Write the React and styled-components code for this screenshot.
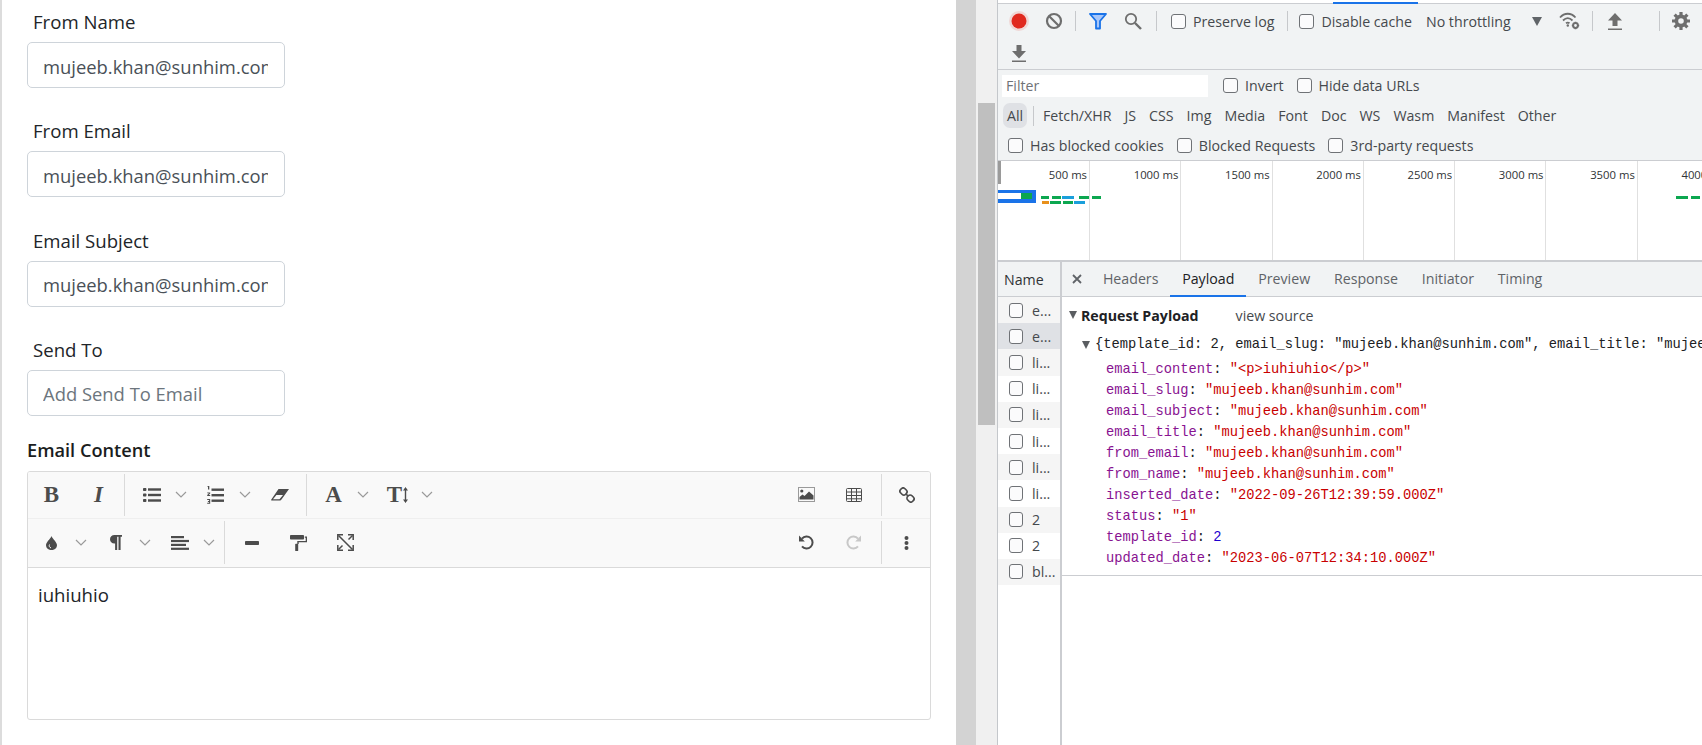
import React from 'react';
import styled, { createGlobalStyle } from 'styled-components';

const GlobalStyle = createGlobalStyle`
  * { box-sizing: border-box; }
  html, body { margin: 0; padding: 0; background: #fff; }
  body { font-family: "Open Sans", "Liberation Sans", sans-serif; overflow: hidden; }
`;

const Page = styled.div`
  display: flex;
  width: 1702px;
  height: 745px;
  overflow: hidden;
`;

/* ---------- form side ---------- */

const FormPane = styled.div`
  width: 956px;
  flex: none;
  border-left: 2px solid #dcdcdc;
  padding: 10px 25px 0;
  background: #fff;
`;

const FieldLabel = styled.label`
  display: block;
  height: 24px;
  line-height: 24px;
  padding-left: 6px;
  margin-bottom: 8px;
  font-size: 18.6px;
  color: #212529;
`;

const Field = styled.div`
  margin-bottom: 31.3px;
  &:nth-of-type(4) { margin-bottom: 22px; }
`;

const TextInput = styled.input`
  display: block;
  width: 258px;
  height: 46px;
  padding: 2px 16px 0 15px;
  border: 1px solid #ced4da;
  border-radius: 5px;
  background: #fff;
  font-family: inherit;
  font-size: 18.4px;
  color: #495057;
  outline: none;
  &::placeholder { color: #6c757d; opacity: 1; }
`;

const SectionLabel = styled.div`
  height: 24px;
  line-height: 24px;
  margin-bottom: 9px;
  font-size: 18.2px;
  font-weight: 600;
  color: #1a1d20;
`;

const Editor = styled.div`
  width: 904px;
  height: 249.6px;
  border: 1px solid #dadada;
  border-radius: 3px;
  overflow: hidden;
`;

const EditorRow = styled.div`
  display: flex;
  align-items: center;
  height: ${p => p.$h}px;
  background: #f9f9f9;
  border-bottom: 1px solid ${p => p.$line};
`;

const BtnGroup = styled.div`
  display: flex;
  align-items: center;
  height: ${p => p.$h}px;
  padding: 0 ${p => p.$pr ?? 2}px 0 ${p => p.$pl ?? 3}px;
  border-right: ${p => (p.$last ? 'none' : '1px solid #dadada')};
`;

const RightTools = styled.div`
  display: flex;
  align-items: center;
  margin-left: auto;
`;

const EditorBtn = styled.span`
  display: flex;
  align-items: center;
  justify-content: center;
  gap: 1px;
  width: 47px;
  height: 40px;
  color: ${p => (p.$off ? '#c8c8c8' : '#4c4c4c')};
`;

const Glyph = styled.span`
  font-family: "Liberation Serif", serif;
  font-weight: 700;
  font-style: ${p => (p.$italic ? 'italic' : 'normal')};
  font-size: 23px;
  line-height: 1;
`;

const ChevronSlot = styled.span`
  display: flex;
  align-items: center;
  width: 17px;
  height: 40px;
  color: #9a9a9a;
`;

const EditorBody = styled.div`
  padding: 15px 10px;
  font-size: 18.6px;
  line-height: 24px;
  color: #212529;
`;

/* ---------- middle scrollbar ---------- */

const Track = styled.div`
  width: 20px;
  flex: none;
  background: #d3d3d3;
`;

const Gutter = styled.div`
  width: 21px;
  flex: none;
  background: #f0f0f0;
  padding: 103px 2px 0 2px;
`;

const Thumb = styled.div`
  height: 322px;
  background: #bfbfbf;
`;

/* ---------- devtools ---------- */

const DevTools = styled.div`
  flex: 1;
  min-width: 0;
  display: flex;
  flex-direction: column;
  border-left: 1px solid #c4c7cb;
  font-size: 14.2px;
  color: #45494d;
  background: #fff;
`;

const TopEdge = styled.div`
  height: 4px;
  flex: none;
  background: #fff;
  border-bottom: 1px solid #cbcdd1;
  padding-left: 335px;
`;

const TopTab = styled.div`
  width: 85px;
  height: 2px;
  margin-top: 2px;
  background: #1a73e8;
`;

const Controls = styled.div`
  flex: none;
  background: #f1f3f4;
  border-bottom: 1px solid #cbcdd1;
`;

const Bar = styled.div`
  display: flex;
  align-items: center;
  height: ${p => p.$h}px;
  padding-left: ${p => p.$pl || 0}px;
`;

const ToolIcon = styled.span`
  display: flex;
  align-items: center;
  justify-content: center;
  width: 35px;
  height: 28px;
  flex: none;
  color: #6e6e6e;
`;

const ToolSep = styled.span`
  width: 1px;
  height: 20px;
  flex: none;
  margin-left: ${p => p.$ml ?? 4}px;
  margin-right: ${p => p.$mr ?? 4}px;
  background: #c6c8cb;
`;

const Check = styled.span`
  display: inline-block;
  width: ${p => p.$w || 15}px;
  height: 15px;
  flex: none;
  border: 1px solid #6f7276;
  border-radius: 3px;
  background: #fbfbfc;
`;

const CheckLabel = styled.span`
  display: flex;
  align-items: center;
  gap: 7px;
  flex: none;
  margin-left: ${p => p.$ml || 0}px;
  white-space: nowrap;
`;

const Throttle = styled.span`
  display: flex;
  align-items: center;
  justify-content: space-between;
  width: 116px;
  flex: none;
  margin-left: 14px;
  margin-right: 10px;
  white-space: nowrap;
`;

const Caret = styled.span`
  width: 0;
  height: 0;
  border-left: 5px solid transparent;
  border-right: 5px solid transparent;
  border-top: 9px solid #606468;
`;

const FilterBox = styled.div`
  width: 206px;
  height: 22px;
  flex: none;
  margin-right: 15px;
  padding-left: 4px;
  line-height: 22px;
  background: #fff;
  color: #6f7276;
`;

const TypeAll = styled.span`
  width: 24px;
  height: 25px;
  flex: none;
  line-height: 25px;
  text-align: center;
  border-radius: 7px;
  background: #dfe1e5;
`;

const TypeSep = styled.span`
  width: 1px;
  height: 20px;
  flex: none;
  margin: 0 9px 0 6px;
  background: #c6c8cb;
`;

const TypeItem = styled.span`
  flex: none;
  margin-right: 13px;
`;

const Overview = styled.div`
  height: 101px;
  flex: none;
  display: flex;
  flex-direction: column;
  overflow: hidden;
  background: #fff;
  border-bottom: 2px solid #cbcdd1;
`;

const TimeRuler = styled.div`
  display: flex;
  height: 99px;
  flex: none;
  margin-bottom: -99px;
`;

const TimeCell = styled.div`
  width: ${p => p.$w}px;
  flex: none;
  padding: 6px 2px 0 0;
  text-align: right;
  font-size: 11.3px;
  line-height: 16px;
  white-space: nowrap;
  color: #303336;
  border-right: 1px solid #e0e0e0;
`;

const Lanes = styled.svg`
  display: block;
  flex: none;
`;

const Lower = styled.div`
  flex: 1;
  min-height: 0;
  display: flex;
`;

const NameCol = styled.div`
  width: 64px;
  flex: none;
  border-right: 2px solid #cbcdd1;
`;

const NameHead = styled.div`
  height: 35px;
  padding-left: 6px;
  line-height: 35px;
  background: #f1f3f4;
  border-bottom: 1px solid #cbcdd1;
  color: #303336;
`;

const NameRow = styled.div`
  display: flex;
  align-items: center;
  gap: 9px;
  height: 26.2px;
  padding-left: 11px;
  background: ${p => (p.$selected ? '#dfe1e5' : p.$odd ? '#f5f5f5' : '#fff')};
  overflow: hidden;
  white-space: nowrap;
`;

const Details = styled.div`
  flex: 1;
  min-width: 0;
  display: flex;
  flex-direction: column;
`;

const Tabs = styled.div`
  display: flex;
  align-items: stretch;
  height: 35px;
  flex: none;
  background: #f1f3f4;
  border-bottom: 1px solid #cbcdd1;
`;

const CloseX = styled.span`
  display: flex;
  align-items: center;
  justify-content: center;
  width: 29px;
  color: #5f6368;
`;

const Tab = styled.span`
  display: flex;
  align-items: center;
  padding: 0 11.9px;
  margin-bottom: -1px;
  color: ${p => (p.$active ? '#202124' : '#5f6368')};
  border-bottom: 2px solid ${p => (p.$active ? '#1a73e8' : 'transparent')};
`;

const Payload = styled.div`
  height: 279px;
  flex: none;
  overflow: hidden;
  border-bottom: 1px solid #cbcdd1;
  padding-top: 7px;
`;

const PayloadHead = styled.div`
  display: flex;
  align-items: center;
  height: 22px;
  padding-left: 7px;
  margin-bottom: 8px;
`;

const Tri = styled.span`
  width: 0;
  height: 0;
  flex: none;
  margin-right: ${p => p.$mr}px;
  border-left: 4.5px solid transparent;
  border-right: 4.5px solid transparent;
  border-top: 8px solid #5a5d61;
`;

const HeadTitle = styled.b`
  font-weight: 700;
  color: #202124;
  margin-right: 37px;
`;

const SummaryLine = styled.div`
  display: flex;
  align-items: center;
  height: 21px;
  padding-left: 20px;
  margin-bottom: 4px;
  font-family: "Liberation Mono", monospace;
  font-size: 13.75px;
  white-space: nowrap;
  color: #202124;
`;

const PropLine = styled.div`
  height: 21.05px;
  line-height: 21px;
  padding-left: 44px;
  font-family: "Liberation Mono", monospace;
  font-size: 13.75px;
  white-space: nowrap;
  color: #202124;
`;

const PropKey = styled.span`
  color: #881391;
`;

const PropValue = styled.span`
  color: ${p => (p.$num ? '#1c00cf' : '#c80000')};
`;

/* ---------- editor icons ---------- */

const Chevron = () => (
  <svg width="12" height="7" viewBox="0 0 12 7"><path d="M1 1l5 5 5-5" fill="none" stroke="currentColor" strokeWidth="1.2" /></svg>
);

const UlIcon = () => (
  <svg width="18" height="14" viewBox="0 0 18 14" fill="currentColor">
    <rect x="0" y="0" width="3.4" height="3" rx=".8" /><rect x="0" y="5.5" width="3.4" height="3" rx=".8" /><rect x="0" y="11" width="3.4" height="3" rx=".8" />
    <rect x="5" y=".3" width="13" height="2.4" /><rect x="5" y="5.8" width="13" height="2.4" /><rect x="5" y="11.3" width="13" height="2.4" />
  </svg>
);

const OlIcon = () => (
  <svg width="17" height="18" viewBox="0 0 17 18" fill="currentColor">
    <rect x="4.5" y="2.5" width="12.5" height="2.4" /><rect x="4.5" y="8" width="12.5" height="2.4" /><rect x="4.5" y="13.5" width="12.5" height="2.4" />
    <path d="M1 0h1.3v3.6H1V1H.2zM.2 6.4h3v1L1.700 9h1.500v1H.2V9l1.700-1.700H.2zM.2 13h3v4.800h-3v-1h1.900v-.9H.900v-.9h1.200v-1H.2z" />
  </svg>
);

const EraserIcon = () => (
  <svg width="18" height="12" viewBox="0 0 18 12" fill="currentColor">
    <path d="M7.500 0H18l-7.300 10.200c-.6.900-1.200 1.300-2 1.300H.8C.2 11.500 0 11 .3 10.500zM2 10.300h6.500L12 6H5.400z" fillRule="evenodd" />
  </svg>
);

const SizeArrow = () => (
  <svg width="5" height="16" viewBox="0 0 5 16" fill="currentColor">
    <path d="M2.500 0L5 3.500H3.200v9H5L2.500 16 0 12.500h1.800v-9H0z" />
  </svg>
);

const DropIcon = () => (
  <svg width="11" height="14" viewBox="0 0 11 14" fill="currentColor">
    <path d="M5.500 0C6.600 3 11 6.200 11 9.200A5.400 4.800 0 0 1 0 9.200C0 6.200 4.400 3 5.500 0z" />
    <path d="M3.500 8.500c-.7 1.600 0 3 1.500 3.400" fill="none" stroke="#f9f9f9" strokeWidth="1" />
  </svg>
);

const ParaIcon = () => (
  <svg width="12" height="15" viewBox="0 0 12 15" fill="currentColor">
    <path d="M4.500 0H12v1.800h-1.400V15H8.500V1.800H7.200V15H5.100V8.600H4.500C1.800 8.600 0 6.800 0 4.300S1.800 0 4.500 0z" />
  </svg>
);

const AlignIcon = () => (
  <svg width="18" height="14" viewBox="0 0 18 14" fill="currentColor">
    <rect x="0" y="0" width="13" height="2.200" /><rect x="0" y="3.900" width="18" height="2.200" />
    <rect x="0" y="7.800" width="15" height="2.200" /><rect x="0" y="11.700" width="18" height="2.200" />
  </svg>
);

const HrIcon = () => (
  <svg width="14" height="4" viewBox="0 0 14 4" fill="currentColor"><rect width="14" height="4" rx=".8" /></svg>
);

const PaintIcon = () => (
  <svg width="17" height="16" viewBox="0 0 17 16" fill="currentColor">
    <rect x="0" y="0" width="14" height="4.500" rx=".8" />
    <path d="M14.800 1.500H17v5.800H8.700v1.700H7.300V6h8.400V2.700h-.9z" />
    <rect x="5.200" y="8.800" width="3" height="7.200" rx=".6" />
  </svg>
);

const FullIcon = () => (
  <svg width="17" height="17" viewBox="0 0 17 17" fill="none" stroke="currentColor" strokeWidth="1.500">
    <path d="M.8 6V.8H6M11 .8h5.200V6M16.200 11v5.200H11M6 16.200H.8V11" />
    <path d="M1.500 1.500l14 14M15.500 1.500l-4 4M5.500 11.500l-4 4" />
  </svg>
);

const ImageIcon = () => (
  <svg width="17" height="15" viewBox="0 0 17 15">
    <rect x=".5" y=".5" width="16" height="14" fill="none" stroke="#9a9a9a" />
    <circle cx="3.800" cy="4" r="1.600" fill="#4c4c4c" />
    <path d="M1.500 12.500V10l3-2.500L6.500 9l4.500-4.500 4.500 4v4z" fill="#4c4c4c" />
  </svg>
);

const TableIcon = () => (
  <svg width="16" height="14" viewBox="0 0 16 14" fill="none" stroke="currentColor" strokeWidth="1">
    <rect x=".5" y=".5" width="15" height="13" rx="1" />
    <path d="M.5 4h15M.5 7.500h15M.5 10.800h15M5.500.5v13M10.500.5v13" />
  </svg>
);

const LinkIcon = () => (
  <svg width="16" height="16" viewBox="0 0 16 16" fill="none" stroke="currentColor" strokeWidth="1.700">
    <rect x="1" y="1.500" width="7" height="6" rx="2.600" transform="rotate(45 4.500 4.500)" />
    <rect x="8" y="8.500" width="7" height="6" rx="2.600" transform="rotate(45 11.500 11.500)" />
    <path d="M7 7l2 2" />
  </svg>
);

const UndoIcon = ({ flip }) => (
  <svg width="15" height="15" viewBox="0 0 15 15" style={flip ? { transform: 'scaleX(-1)' } : undefined}>
    <path d="M3 3.600A6 6 0 1 1 3 11.400" fill="none" stroke="currentColor" strokeWidth="2" />
    <path d="M0 .6l5.800 5.800H0z" fill="currentColor" />
  </svg>
);

const DotsIcon = () => (
  <svg width="5" height="14" viewBox="0 0 5 14" fill="currentColor">
    <circle cx="2.500" cy="2" r="2" /><circle cx="2.500" cy="7" r="2" /><circle cx="2.500" cy="12" r="2" />
  </svg>
);

/* ---------- devtools icons ---------- */

const RecordIcon = () => (
  <svg width="22" height="22" viewBox="0 0 22 22">
    <circle cx="11" cy="11" r="10" fill="#e9302624" />
    <circle cx="11" cy="11" r="7.500" fill="#e0291f" />
  </svg>
);

const BlockIcon = () => (
  <svg width="18" height="18" viewBox="0 0 18 18" fill="none" stroke="#6e6e6e" strokeWidth="2.200">
    <circle cx="9" cy="9" r="7" /><path d="M4 4l10 10" />
  </svg>
);

const FunnelIcon = () => (
  <svg width="18" height="17" viewBox="0 0 18 17">
    <path d="M1 1h16l-6 7v7.500H7V8z" fill="#a8c7fa" stroke="#1a73e8" strokeWidth="1.800" strokeLinejoin="round" />
  </svg>
);

const SearchIcon = () => (
  <svg width="18" height="18" viewBox="0 0 18 18" fill="none" stroke="#6e6e6e">
    <circle cx="7" cy="7" r="5.200" strokeWidth="1.800" /><path d="M11 11l6 6" strokeWidth="2.400" />
  </svg>
);

const WifiIcon = () => (
  <svg width="21" height="18" viewBox="0 0 21 18" fill="none" stroke="#6e6e6e" strokeWidth="1.800">
    <path d="M1 5.500c4.500-5 11-5 15.500 0M4 8.500c3-3 6.500-3 9.500 0M7 11.300c1.300-1 2.200-1 3.500 0" />
    <circle cx="8.800" cy="13.500" r="1.200" fill="#6e6e6e" stroke="none" />
    <circle cx="16.500" cy="13.500" r="2.400" strokeWidth="2" />
    <path d="M16.500 9.800v1.300M16.500 15.900v1.300M12.800 13.500h1.300M18.900 13.500h1.300" strokeWidth="1.600" />
  </svg>
);

const ArrowBar = ({ down }) => (
  <svg width="14" height="17" viewBox="0 0 14 17" fill="#6e6e6e">
    <path d={down ? 'M4.500 0h5v6H14l-7 7.500L0 6h4.500z' : 'M7 0l7 7.500H9.500V13h-5V7.500H0z'} />
    <rect x="0" y="15.500" width="14" height="1.500" />
  </svg>
);

const GearIcon = () => (
  <svg width="18" height="18" viewBox="0 0 18 18" fill="none" stroke="#6e6e6e">
    <circle cx="9" cy="9" r="4.600" strokeWidth="3.600" />
    <path d="M9 0v4M9 14v4M0 9h4M14 9h4M2.600 2.600l2.800 2.800M12.600 12.600l2.800 2.800M15.400 2.600l-2.800 2.800M5.400 12.600l-2.800 2.800" strokeWidth="3.200" />
  </svg>
);

/* ---------- data ---------- */

const fields = [
  { label: 'From Name', value: 'mujeeb.khan@sunhim.com' },
  { label: 'From Email', value: 'mujeeb.khan@sunhim.com' },
  { label: 'Email Subject', value: 'mujeeb.khan@sunhim.com' },
  { label: 'Send To', value: '', placeholder: 'Add Send To Email' },
];

const types = ['Fetch/XHR', 'JS', 'CSS', 'Img', 'Media', 'Font', 'Doc', 'WS', 'Wasm', 'Manifest', 'Other'];
const times = ['500 ms', '1000 ms', '1500 ms', '2000 ms', '2500 ms', '3000 ms', '3500 ms', '4000 ms'];
const names = ['e...', 'e...', 'li...', 'li...', 'li...', 'li...', 'li...', 'li...', '2', '2', 'bl...'];
const tabs = ['Headers', 'Payload', 'Preview', 'Response', 'Initiator', 'Timing'];

const payload = [
  ['email_content', '"<p>iuhiuhio</p>"'],
  ['email_slug', '"mujeeb.khan@sunhim.com"'],
  ['email_subject', '"mujeeb.khan@sunhim.com"'],
  ['email_title', '"mujeeb.khan@sunhim.com"'],
  ['from_email', '"mujeeb.khan@sunhim.com"'],
  ['from_name', '"mujeeb.khan@sunhim.com"'],
  ['inserted_date', '"2022-09-26T12:39:59.000Z"'],
  ['status', '"1"'],
  ['template_id', '2', true],
  ['updated_date', '"2023-06-07T12:34:10.000Z"'],
];

const laneBars = [
  [43, 29, 8, '#0ca750'], [54, 29, 9, '#0ca750'], [64, 29, 12, '#1a9fdb'], [81, 29, 10, '#0ca750'], [94, 29, 9, '#0ca750'],
  [44, 34, 7, '#e8901b'], [52, 34, 11, '#0ca750'], [65, 34, 10, '#0ca750'], [76, 34, 11, '#1a9fdb'],
  [678, 29, 12, '#0ca750'], [693, 29, 9, '#0ca750'],
];

const Drop = ({ children }) => (
  <>
    <EditorBtn>{children}</EditorBtn>
    <ChevronSlot><Chevron /></ChevronSlot>
  </>
);

export default function App() {
  return (
    <Page>
      <GlobalStyle />
      <FormPane>
        {fields.map(f => (
          <Field key={f.label}>
            <FieldLabel>{f.label}</FieldLabel>
            <TextInput readOnly value={f.value} placeholder={f.placeholder} />
          </Field>
        ))}
        <SectionLabel>Email Content</SectionLabel>
        <Editor>
          <EditorRow $h={47} $line="#efefef">
            <BtnGroup $h={42} $pl={0}>
              <EditorBtn><Glyph>B</Glyph></EditorBtn>
              <EditorBtn><Glyph $italic>I</Glyph></EditorBtn>
            </BtnGroup>
            <BtnGroup $h={42} $pr={3}>
              <Drop><UlIcon /></Drop>
              <Drop><OlIcon /></Drop>
              <EditorBtn><EraserIcon /></EditorBtn>
            </BtnGroup>
            <BtnGroup $h={42} $last>
              <Drop><Glyph>A</Glyph></Drop>
              <Drop><Glyph>T</Glyph><SizeArrow /></Drop>
            </BtnGroup>
            <RightTools>
              <BtnGroup $h={42} $pr={4}>
                <EditorBtn><ImageIcon /></EditorBtn>
                <EditorBtn><TableIcon /></EditorBtn>
              </BtnGroup>
              <BtnGroup $h={42} $last $pr={0} $pl={1}>
                <EditorBtn><LinkIcon /></EditorBtn>
              </BtnGroup>
            </RightTools>
          </EditorRow>
          <EditorRow $h={49} $line="#dadada">
            <BtnGroup $h={43} $pr={4} $pl={0}>
              <Drop><DropIcon /></Drop>
              <Drop><ParaIcon /></Drop>
              <Drop><AlignIcon /></Drop>
            </BtnGroup>
            <BtnGroup $h={43} $last>
              <EditorBtn><HrIcon /></EditorBtn>
              <EditorBtn><PaintIcon /></EditorBtn>
              <EditorBtn><FullIcon /></EditorBtn>
            </BtnGroup>
            <RightTools>
              <BtnGroup $h={43} $pr={4}>
                <EditorBtn><UndoIcon /></EditorBtn>
                <EditorBtn $off><UndoIcon flip /></EditorBtn>
              </BtnGroup>
              <BtnGroup $h={43} $last $pr={0} $pl={1}>
                <EditorBtn><DotsIcon /></EditorBtn>
              </BtnGroup>
            </RightTools>
          </EditorRow>
          <EditorBody>iuhiuhio</EditorBody>
        </Editor>
      </FormPane>

      <Track />
      <Gutter><Thumb /></Gutter>

      <DevTools>
        <TopEdge><TopTab /></TopEdge>
        <Controls>
          <Bar $h={34} $pl={3}>
            <ToolIcon><RecordIcon /></ToolIcon>
            <ToolIcon><BlockIcon /></ToolIcon>
            <ToolSep />
            <ToolIcon><FunnelIcon /></ToolIcon>
            <ToolIcon><SearchIcon /></ToolIcon>
            <ToolSep $ml={6} $mr={0} />
            <CheckLabel $ml={14}><Check />Preserve log</CheckLabel>
            <ToolSep $ml={13} $mr={0} />
            <CheckLabel $ml={11}><Check />Disable cache</CheckLabel>
            <Throttle>No throttling<Caret /></Throttle>
            <ToolIcon><WifiIcon /></ToolIcon>
            <ToolSep $ml={5} $mr={5} />
            <ToolIcon><ArrowBar /></ToolIcon>
            <ToolSep $ml={26} $mr={4} />
            <ToolIcon><GearIcon /></ToolIcon>
          </Bar>
          <Bar $h={31} $pl={3}>
            <ToolIcon><ArrowBar down /></ToolIcon>
          </Bar>
        </Controls>
        <Controls>
          <Bar $h={31} $pl={4}>
            <FilterBox>Filter</FilterBox>
            <CheckLabel><Check />Invert</CheckLabel>
            <CheckLabel $ml={13}><Check />Hide data URLs</CheckLabel>
          </Bar>
          <Bar $h={29} $pl={5}>
            <TypeAll>All</TypeAll>
            <TypeSep />
            {types.map(t => <TypeItem key={t}>{t}</TypeItem>)}
          </Bar>
          <Bar $h={30} $pl={10}>
            <CheckLabel><Check />Has blocked cookies</CheckLabel>
            <CheckLabel $ml={13}><Check />Blocked Requests</CheckLabel>
            <CheckLabel $ml={13}><Check />3rd-party requests</CheckLabel>
          </Bar>
        </Controls>
        <Overview>
          <TimeRuler>
            {times.map((t, i) => <TimeCell key={t} $w={i === 0 ? 92 : 91.3}>{t}</TimeCell>)}
          </TimeRuler>
          <Lanes width="703" height="44" viewBox="0 0 703 44">
            <rect x="0" y="0" width="3" height="23" fill="#9a9a9a" />
            <rect x="0" y="29" width="38" height="13" fill="#1a73e8" />
            <rect x="0" y="32" width="23" height="6" fill="#fff" />
            <rect x="23" y="32" width="11" height="6" fill="#0ca750" />
            {laneBars.map(([x, y, w, c]) => <rect key={`${x}-${y}`} x={x} y={y + 6} width={w} height="3" fill={c} />)}
          </Lanes>
        </Overview>
        <Lower>
          <NameCol>
            <NameHead>Name</NameHead>
            {names.map((n, i) => (
              <NameRow key={i} $odd={i % 2 === 0} $selected={i === 1}>
                <Check $w={14} />
                {n}
              </NameRow>
            ))}
          </NameCol>
          <Details>
            <Tabs>
              <CloseX>
                <svg width="10" height="10" viewBox="0 0 10 10" stroke="currentColor" strokeWidth="1.800"><path d="M1 1l8 8M9 1l-8 8" /></svg>
              </CloseX>
              {tabs.map(t => <Tab key={t} $active={t === 'Payload'}>{t}</Tab>)}
            </Tabs>
            <Payload>
              <PayloadHead>
                <Tri $mr={4} />
                <HeadTitle>Request Payload</HeadTitle>
                view source
              </PayloadHead>
              <SummaryLine>
                <Tri $mr={5} />
                {'{template_id: 2, email_slug: "mujeeb.khan@sunhim.com", email_title: "mujeeb.khan@sunhim.com"'}
              </SummaryLine>
              {payload.map(([k, v, num]) => (
                <PropLine key={k}>
                  <PropKey>{k}</PropKey>: <PropValue $num={num}>{v}</PropValue>
                </PropLine>
              ))}
            </Payload>
          </Details>
        </Lower>
      </DevTools>
    </Page>
  );
}
